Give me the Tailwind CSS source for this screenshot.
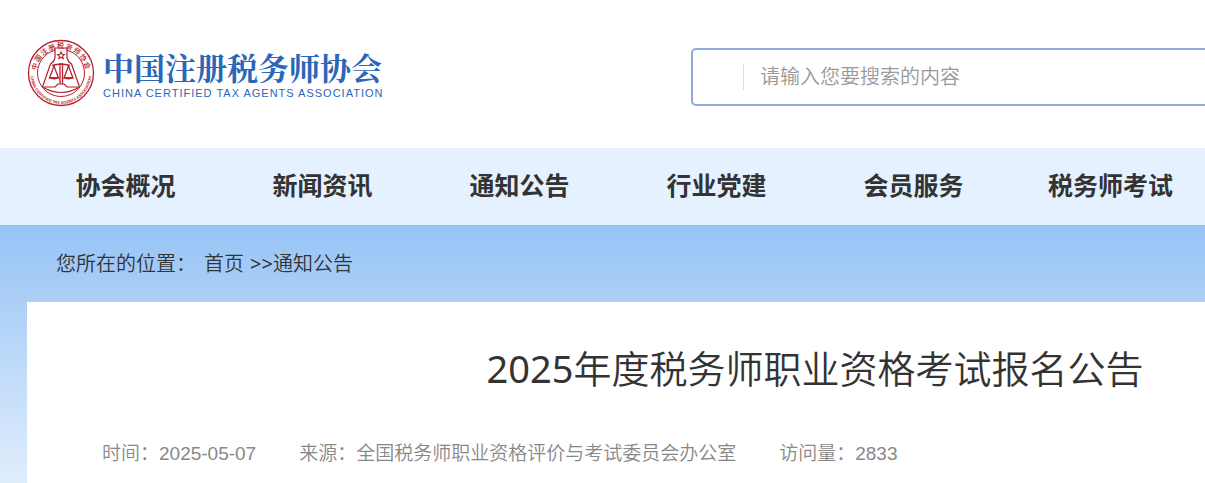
<!DOCTYPE html>
<html lang="zh-CN">
<head>
<meta charset="utf-8">
<title>中国注册税务师协会</title>
<script src="https://cdn.jsdelivr.net/npm/@tailwindcss/browser@4"></script>
</head>
<body class="overflow-hidden bg-white font-['Liberation_Sans','Noto_Sans_CJK_SC',sans-serif] text-[#333]">
<div class="flex min-h-screen min-w-[1630px] flex-col">
  <header class="flex h-[148px] items-center justify-between px-[27px]">
    <a href="#" class="flex items-center gap-2 pb-[2px] text-[#2b66b8]">
      <svg class="size-[68px] shrink-0" viewBox="0 0 68 68" fill="none" stroke="#b5202b" aria-hidden="true">
        <defs>
          <path id="top" d="M9.600 38A24.700 24.700 0 1 1 58.400 38"/>
          <path id="bottom" d="M3.700 31A30.500 30.500 0 1 0 64.300 31"/>
        </defs>
        <circle cx="34" cy="34" r="32.500" stroke-width="1.300"/>
        <circle cx="34" cy="34" r="23.500" stroke-width="1"/>
        <path d="M28 9V19Q27 23 23.500 25L15.500 48Q34 59 52.500 48L44.500 25Q41 23 40 19V9Z" fill="#fff" stroke-width="1.200"/>
        <path d="M17 48H28L31 45H37L40 48H51" stroke-width="1.200"/>
        <path d="M34 13l1 2.300 2.500.2-1.900 1.600.6 2.400-2.200-1.300-2.200 1.300.6-2.400-1.900-1.600 2.500-.2z" stroke-width="1.100"/>
        <path d="M25 26.500Q34 24 43 26.500M33 24V45M35.500 24V45M27 27L22.500 39H31.500ZM41.500 27L37 39H46Z" stroke-width="1.300"/>
        <path d="M22.500 38.500Q27 42 31.500 38.500ZM37 38.500Q41.500 42 46 38.500Z" fill="#b5202b" stroke-width=".5"/>
        <g fill="#b5202b" stroke="none">
          <text class="font-['Noto_Sans_CJK_SC',sans-serif] text-[7px] font-medium tracking-[1px]"><textPath href="#top" startOffset="50%" text-anchor="middle">中国注册税务师协会</textPath></text>
          <text class="font-['Liberation_Sans',sans-serif] text-[4px] font-bold"><textPath href="#bottom" startOffset="50%" text-anchor="middle">CHINA CERTIFIED TAX AGENTS ASSOCIATION</textPath></text>
        </g>
      </svg>
      <span class="flex flex-col pt-[2px]">
        <span class="font-['Noto_Serif_CJK_SC','Noto_Sans_CJK_SC',serif] text-[31px]/[38px] font-bold">中国注册税务师协会</span>
        <span class="text-[11px]/[14px] tracking-[1px]">CHINA CERTIFIED TAX AGENTS ASSOCIATION</span>
      </span>
    </a>
    <form class="mt-[6px] flex h-[58px] w-[912px] items-center rounded-[5px] border-2 border-[#8eabdb] pl-[50px]">
      <input type="search" aria-label="搜索" placeholder="请输入您要搜索的内容" class="h-[26px] flex-1 border-l border-[#ddd] pl-4 text-[20px]/[26px] font-[350] outline-none placeholder:text-[#999]">
    </form>
  </header>
  <nav class="grid h-[77px] grid-cols-8 items-center bg-[#e5f1ff] px-[27px] text-center text-[25px] font-bold">
    <a href="#">协会概况</a>
    <a href="#">新闻资讯</a>
    <a href="#">通知公告</a>
    <a href="#">行业党建</a>
    <a href="#">会员服务</a>
    <a href="#">税务师考试</a>
  </nav>
  <main class="flex flex-1 flex-col bg-linear-to-b from-[#96c3f5] to-[#e0edfc] px-[27px]">
    <div class="flex h-[77px] items-center pl-[29px] font-['Noto_Sans','Noto_Sans_CJK_SC',sans-serif] text-[20px] font-[350]">
      <span class="mr-2">您所在的位置：</span>
      <a href="#" class="mr-[6px]">首页</a>
      <span class="font-normal">&gt;&gt;</span>
      <a href="#">通知公告</a>
    </div>
    <article class="flex-1 bg-white pt-[38px]">
      <h1 class="text-center font-['Noto_Sans','Noto_Sans_CJK_SC',sans-serif] text-[38px]/[56px] font-[350]"><span class="font-normal">2025</span>年度税务师职业资格考试报名公告</h1>
      <div class="mt-[43px] flex gap-[43px] pl-[75px] text-[19px]/[30px] font-[350] text-[#888]">
        <span>时间：2025-05-07</span>
        <span>来源：全国税务师职业资格评价与考试委员会办公室</span>
        <span>访问量：2833</span>
      </div>
    </article>
  </main>
</div>
</body>
</html>
